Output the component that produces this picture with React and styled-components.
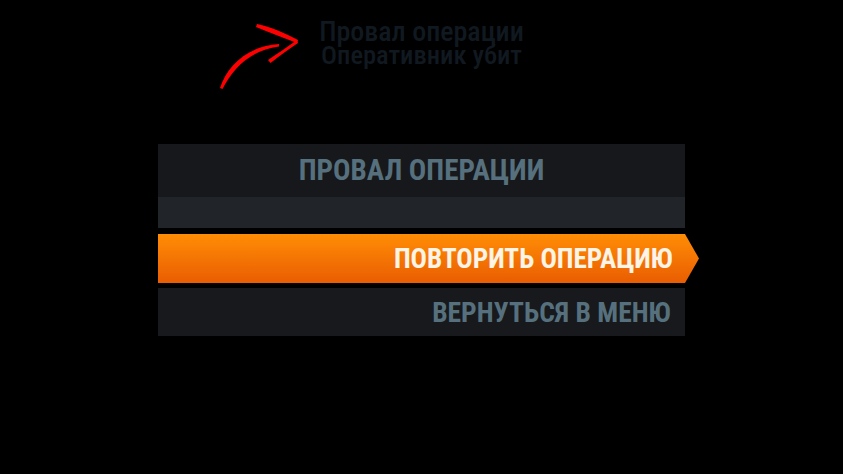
import React from 'react';
import styled, { createGlobalStyle } from 'styled-components';

const GlobalStyle = createGlobalStyle`
  html, body {
    margin: 0;
    background: #000;
  }
  body {
    font-family: Roboto, "Liberation Sans", sans-serif;
  }
`;

const Screen = styled.div`
  width: 843px;
  height: 474px;
  background: #000;
  display: flex;
  flex-direction: column;
  align-items: center;
  overflow: hidden;
`;

const Header = styled.div`
  position: relative;
  margin-top: 20px;
  display: flex;
  flex-direction: column;
  align-items: center;
  color: #111920;
  font-stretch: 75%;
  font-weight: 500;
  line-height: 23px;
`;

const HeaderLine = styled.div`
  font-size: ${p => p.$size}px;
  white-space: nowrap;
`;

const Pointer = styled.svg`
  position: absolute;
  left: -104px;
  top: -2px;
`;

const Panel = styled.div`
  margin-top: 78px;
  width: 527px;
  display: flex;
  flex-direction: column;
  font-stretch: 75%;
  font-weight: 700;
  text-transform: uppercase;
`;

const Title = styled.div`
  height: 53px;
  padding-bottom: 2px;
  box-sizing: border-box;
  background: #16181b;
  color: #56707d;
  font-size: 29px;
  display: flex;
  align-items: center;
  justify-content: center;
`;

const Spacer = styled.div`
  height: 31px;
  background: #212529;
`;

const Option = styled.div`
  margin-top: ${p => p.$gap}px;
  height: ${p => p.$h}px;
  padding-right: 14px;
  display: flex;
  align-items: center;
  justify-content: flex-end;
  font-size: 27.5px;
  color: ${p => (p.$active ? '#fff4e6' : '#56707d')};
  background: ${p => (p.$active ? 'linear-gradient(#ff8d05, #e95d02)' : '#17191c')};
  ${p => p.$active && `
    width: calc(100% + 14px);
    padding-right: 26px;
    box-sizing: border-box;
    font-size: 27.2px;
    clip-path: polygon(0 0, calc(100% - 14px) 0, 100% 50%, calc(100% - 14px) 100%, 0 100%);
  `}
`;

function CurvedArrow() {
  return (
    <Pointer width="90" height="75" viewBox="0 0 90 75">
      {/* tapered curve */}
      <path d="M5 70 C12 48 32 28 64 26 L64 28.5 C36 32 18 50 7.5 71 Z" fill="#ff0000" />
      {/* upper head stroke */}
      <path d="M42 6 C56 9 70 15 83 22 L82 25 C68 20 54 14 41 9 Z" fill="#ff0000" />
      {/* lower head stroke */}
      <path d="M53 42 C62 36 72 29 82 22 L83 25 C73 32 64 38 55.5 45 Z" fill="#ff0000" />
    </Pointer>
  );
}

export default function App() {
  return (
    <Screen>
      <GlobalStyle />
      <Header>
        <CurvedArrow />
        <HeaderLine $size={28}>Провал операции</HeaderLine>
        <HeaderLine $size={26.5}>Оперативник убит</HeaderLine>
      </Header>
      <Panel>
        <Title>Провал операции</Title>
        <Spacer />
        <Option $active $gap={6} $h={49}>Повторить операцию</Option>
        <Option $gap={5} $h={48}>Вернуться в меню</Option>
      </Panel>
    </Screen>
  );
}
